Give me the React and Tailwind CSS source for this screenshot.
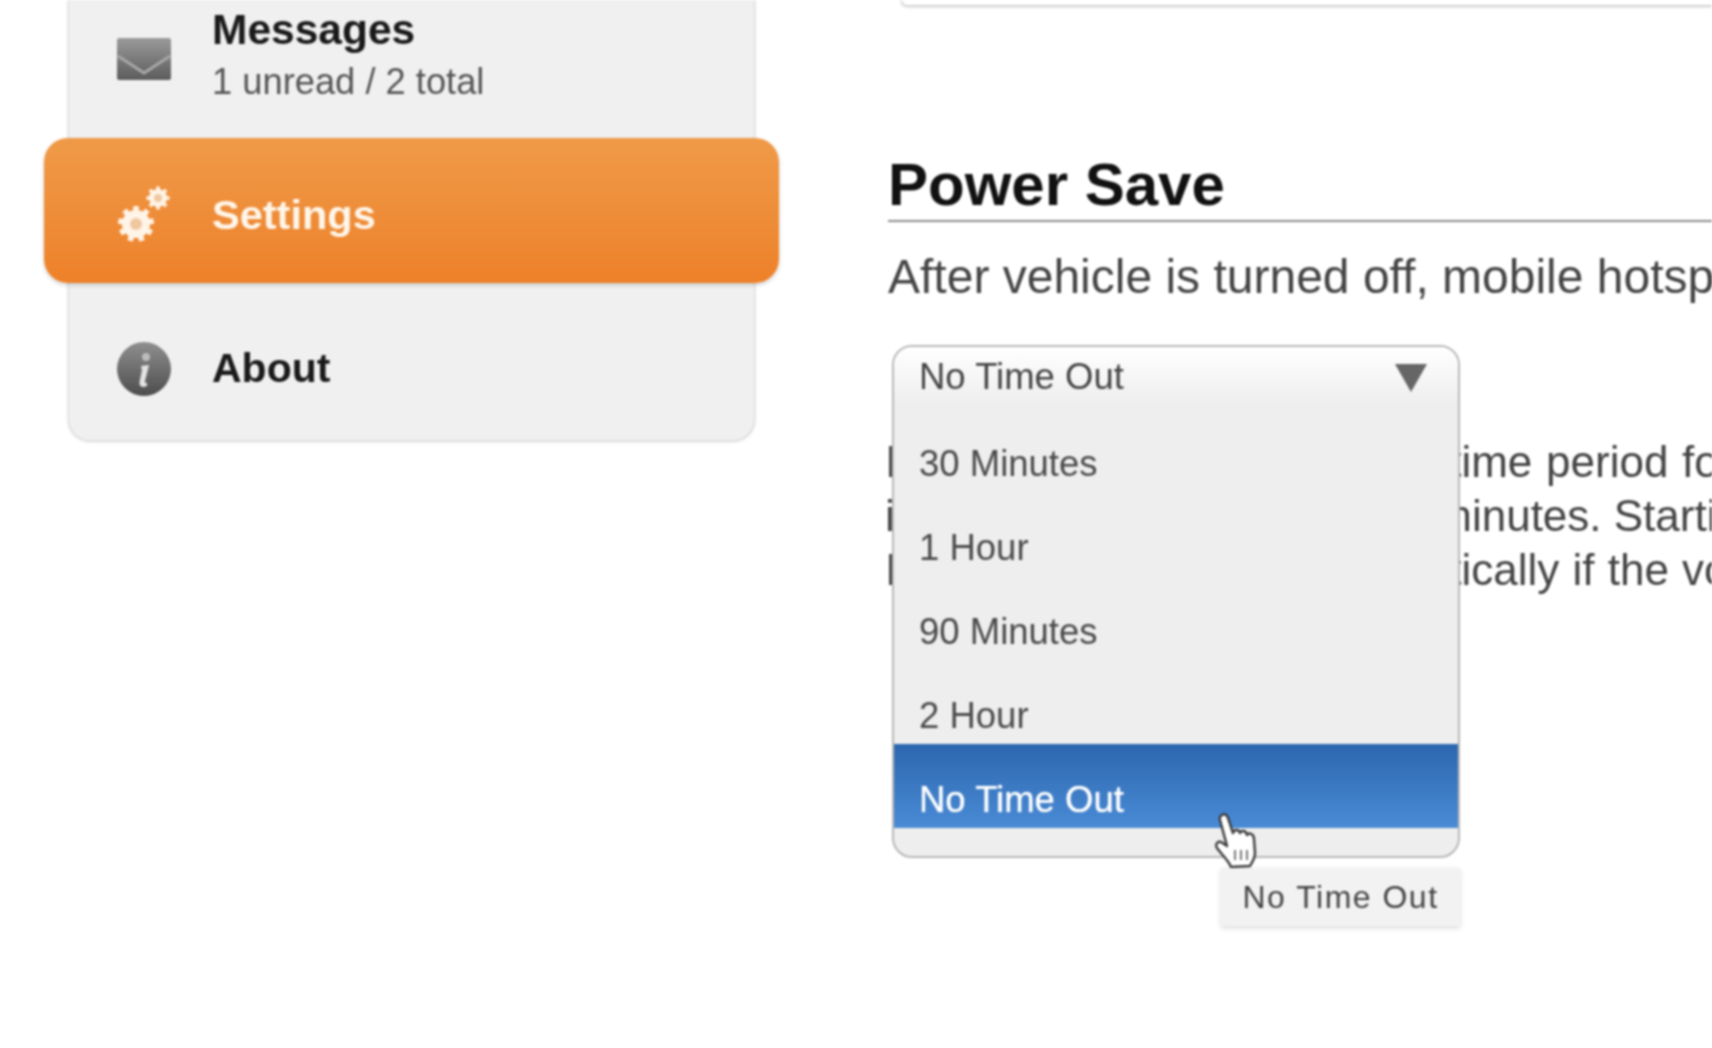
import React from 'react';

const font = { fontFamily: '"Liberation Sans", Arial, sans-serif' };

const EnvelopeIcon = () => (
  <svg width="56" height="44" viewBox="0 0 56 44">
    <defs>
      <linearGradient id="env" x1="0" y1="0" x2="0" y2="1">
        <stop offset="0" stopColor="#9a9a9a" />
        <stop offset="1" stopColor="#5c5c5c" />
      </linearGradient>
    </defs>
    <rect x="1" y="1" width="54" height="42" rx="2" fill="url(#env)" />
    <path d="M2 19 L28 36 L54 19" fill="none" stroke="#a8a8a8" strokeWidth="3" />
  </svg>
);

const Gear = ({ cx, cy, r, hole, teeth }) => {
  const marks = [];
  for (let i = 0; i < teeth; i++) {
    const a = (i * 360) / teeth;
    marks.push(
      <rect key={i} x={cx - r * 0.2} y={cy - r * 1.28} width={r * 0.4} height={r * 0.6} fill="#fff4e8" transform={`rotate(${a} ${cx} ${cy})`} />
    );
  }
  return (
    <g>
      {marks}
      <circle cx={cx} cy={cy} r={r} fill="#fff4e8" />
      <circle cx={cx} cy={cy} r={hole} fill="#f0c8a0" />
    </g>
  );
};

const GearsIcon = () => (
  <svg width="56" height="62" viewBox="0 0 56 62">
    <Gear cx={20} cy={41} r={14} hole={6} teeth={9} />
    <Gear cx={42} cy={15} r={9} hole={4} teeth={8} />
  </svg>
);

const InfoIcon = () => (
  <svg width="56" height="56" viewBox="0 0 56 56">
    <defs>
      <linearGradient id="inf" x1="0" y1="0" x2="0" y2="1">
        <stop offset="0" stopColor="#8f8f8f" />
        <stop offset="1" stopColor="#4d4d4d" />
      </linearGradient>
    </defs>
    <circle cx="28" cy="28" r="27" fill="url(#inf)" />
    <circle cx="30" cy="16" r="4" fill="#bdbdbd" />
    <path d="M25 25 L33 24 L29 40 Q28.5 43 31 41.5 L31 45 Q23 48 23.5 41 L26 29 Z" fill="#e4e4e4" />
  </svg>
);

const HandCursor = () => (
  <svg width="46" height="56" viewBox="0 0 46 56">
    <path
      d="M8 3 C11 1 13 3 14 6 L19 21 C20 17 25 17 26 21 C27 18 32 18 33 23 C35 20 40 22 40 27 L41 41 C41 47 38 50 36 54 L17 55 C15 49 9 44 3 36 C1 33 3 29 7 30 L13 34 L6 8 C5.5 6 6 4 8 3 Z"
      fill="#ffffff"
      stroke="#3c3c3c"
      strokeWidth="2.4"
      strokeLinejoin="round"
    />
    <path d="M21 38 V48 M27 38 V48 M33 38 V48" stroke="#777" strokeWidth="2" fill="none" />
  </svg>
);

const options = ['30 Minutes', '1 Hour', '90 Minutes', '2 Hour'];

export default function App() {
  return (
    <div className="w-[1712px] h-[1048px] bg-white overflow-hidden flex blur-[1px]" style={font}>
      {/* Sidebar */}
      <aside className="w-[888px] shrink-0">
        <div className="ml-[68px] w-[687px] h-[441px] bg-[#f0f0f0] border-x border-b border-[#dcdcdc] rounded-b-[22px] shadow-[0_1px_3px_rgba(0,0,0,0.15)]">
          <div className="h-[138px] flex pl-[47px]">
            <div className="pt-[37px]">
              <EnvelopeIcon />
            </div>
            <div className="ml-[40px] pt-[5px]">
              <div className="text-[42.5px] leading-[50px] font-bold text-[#1a1a1a]">Messages</div>
              <div className="text-[36.3px] leading-[50px] mt-[2px] text-[#555]">1 unread / 2 total</div>
            </div>
          </div>
          <div className="-mx-[25px] h-[145px] flex items-center pl-[72px] rounded-[24px] bg-gradient-to-b from-[#ef9a48] to-[#ee8129] shadow-[0_2px_4px_rgba(0,0,0,0.18)]">
            <div className="mt-[6px]">
              <GearsIcon />
            </div>
            <span className="ml-[40px] mt-[10px] text-[41.5px] font-bold text-[#fff6ea]">Settings</span>
          </div>
          <div className="h-[157px] flex items-center pl-[47px] pt-[14px]">
            <InfoIcon />
            <span className="ml-[40px] text-[41px] font-bold text-[#1a1a1a]">About</span>
          </div>
        </div>
      </aside>

      {/* Main column */}
      <main className="flex-1 min-w-0 overflow-hidden whitespace-nowrap">
        <div className="ml-[13px] h-[6px] border-b border-l border-[#cfcfcf] rounded-bl-[14px] shadow-[0_1px_3px_rgba(0,0,0,0.2)]"></div>

        <h2 className="mt-[144px] text-[60px] leading-[70px] font-bold text-[#111]">Power Save</h2>
        <div className="h-[2px] bg-[#8c8c8c]"></div>
        <p className="mt-[28px] text-[48px] leading-[54px] text-[#444]">
          After vehicle is turned off, mobile hotspot stays on for the selected time
        </p>

        {/* Select */}
        <div className="relative mt-[41px] h-[60px]">
          <div className="absolute top-0 left-[4px] w-[568px] h-[513px] rounded-[20px] border-2 border-[#b8b8b8] bg-[#eeeeee] z-10">
            <div className="h-[58px] flex items-center justify-between pl-[25px] pr-[30px] pt-[3px] rounded-t-[18px] bg-gradient-to-b from-white to-[#eeeeee] text-[36.5px] text-[#444]">
              <span>No Time Out</span>
              <svg width="34" height="30" viewBox="0 0 34 30">
                <path d="M1 1 H33 L17 29 Z" fill="#666" />
              </svg>
            </div>
            <div className="mt-[3px]">
              {options.map((o) => (
                <div key={o} className="h-[84px] flex items-center pl-[25px] pt-[28px] text-[36.5px] text-[#4a4a4a]">
                  {o}
                </div>
              ))}
            </div>
            <div className="h-[84px] flex items-center pl-[25px] pt-[29px] text-[36.5px] text-white [text-shadow:0_0_1px_white] bg-gradient-to-b from-[#2c67ae] to-[#4a8bd6]">
              No Time Out
            </div>
            <div className="absolute left-[320px] top-[465px]">
              <HandCursor />
            </div>
            {/* Tooltip */}
            <div className="absolute right-[-2px] top-[521px] w-[239px] h-[58px] flex items-center justify-center bg-[#f2f2f2] text-[32px] tracking-[1.5px] text-[#444] shadow-[0_2px_5px_rgba(0,0,0,0.15)]">
              No Time Out
            </div>
          </div>
        </div>

        <div className="mt-[30px] -ml-[3px] text-[44px] leading-[54px] text-[#444]">
          <p className="[word-spacing:1.5px]">In Power Save mode, add a time period for the hotspot</p>
          <p>it will remain on for up to 90 minutes. Starting the</p>
          <p className="[word-spacing:1px]">It will then power off, automatically if the voltage drops</p>
        </div>
      </main>
    </div>
  );
}
